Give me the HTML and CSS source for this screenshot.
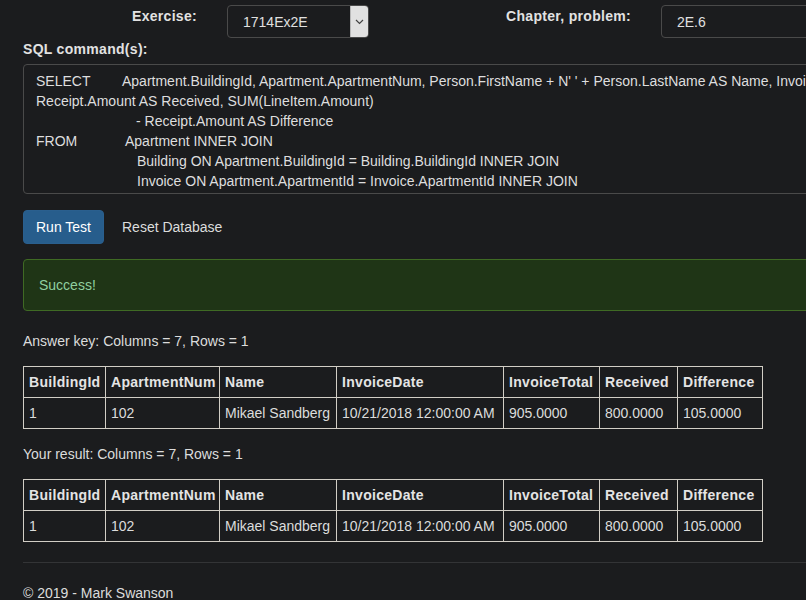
FILE: index.html
```html
<!DOCTYPE html>
<html>
<head>
<meta charset="utf-8">
<link rel="stylesheet" href="styles.css">
</head>
<body>
<div class="page">
  <div class="top-row">
    <label class="lbl lbl-ex">Exercise:</label>
    <div class="field-ex">
      <div class="select">
        <span class="select-val">1714Ex2E</span>
        <span class="select-btn"><svg width="9" height="6" viewBox="0 0 9 6"><path d="M1 1 L4.5 4.5 L8 1" fill="none" stroke="#444" stroke-width="1.2"/></svg></span>
      </div>
    </div>
    <label class="lbl lbl-ch">Chapter, problem:</label>
    <div class="input">2E.6</div>
  </div>

  <div class="lbl sql-lbl">SQL command(s):</div>
  <div class="sql">
    <div class="ln"><span class="kw">SELECT</span>Apartment.BuildingId, Apartment.ApartmentNum, Person.FirstName + N' ' + Person.LastName AS Name, Invoice.InvoiceDate, SUM(LineItem.Amount) AS InvoiceTotal,</div>
    <div class="ln">Receipt.Amount AS Received, SUM(LineItem.Amount)</div>
    <div class="ln ind1">- Receipt.Amount AS Difference</div>
    <div class="ln"><span class="kw kw2">FROM</span>Apartment INNER JOIN</div>
    <div class="ln ind2">Building ON Apartment.BuildingId = Building.BuildingId INNER JOIN</div>
    <div class="ln ind2">Invoice ON Apartment.ApartmentId = Invoice.ApartmentId INNER JOIN</div>
  </div>

  <div class="actions">
    <button class="btn btn-primary">Run Test</button>
    <button class="btn btn-link">Reset Database</button>
  </div>

  <div class="alert">Success!</div>

  <p class="caption cap1">Answer key: Columns = 7, Rows = 1</p>
  <table class="grid">
    <colgroup><col class="w1"><col class="w2"><col class="w3"><col class="w4"><col class="w5"><col class="w6"><col class="w7"></colgroup>
    <tr><th>BuildingId</th><th>ApartmentNum</th><th>Name</th><th>InvoiceDate</th><th>InvoiceTotal</th><th>Received</th><th>Difference</th></tr>
    <tr><td>1</td><td>102</td><td>Mikael Sandberg</td><td>10/21/2018 12:00:00 AM</td><td>905.0000</td><td>800.0000</td><td>105.0000</td></tr>
  </table>

  <p class="caption cap2">Your result: Columns = 7, Rows = 1</p>
  <table class="grid">
    <colgroup><col class="w1"><col class="w2"><col class="w3"><col class="w4"><col class="w5"><col class="w6"><col class="w7"></colgroup>
    <tr><th>BuildingId</th><th>ApartmentNum</th><th>Name</th><th>InvoiceDate</th><th>InvoiceTotal</th><th>Received</th><th>Difference</th></tr>
    <tr><td>1</td><td>102</td><td>Mikael Sandberg</td><td>10/21/2018 12:00:00 AM</td><td>905.0000</td><td>800.0000</td><td>105.0000</td></tr>
  </table>

  <hr class="rule">
  <footer class="foot">© 2019 - Mark Swanson</footer>
</div>
</body>
</html>
```

FILE: styles.css
```css
html, body {
  margin: 0;
  padding: 0;
  overflow: hidden;
  background: #1b1c1e;
}
body {
  font-family: "Liberation Sans", Arial, sans-serif;
  font-size: 14px;
  line-height: 20px;
  color: #dcdcdc;
}
.page {
  width: 1100px;
  padding: 5px 0 0 23px;
}
.top-row {
  display: flex;
  align-items: flex-start;
  height: 33px;
}
.lbl {
  font-weight: bold;
  color: #e2e2e2;
  letter-spacing: 0.3px;
}
.lbl-ex {
  width: 174px;
  padding: 1px 15px 0 0;
  text-align: right;
}
.field-ex {
  width: 157px;
  padding-left: 15px;
}
.select {
  width: 142px;
  height: 33px;
  box-sizing: border-box;
  display: flex;
  border: 1px solid #4a4a4a;
  border-radius: 4px;
  overflow: hidden;
}
.select-val {
  flex: 1;
  padding: 6px 0 0 15px;
  color: #e0e0e0;
}
.select-btn {
  width: 17px;
  background: #e1e1e1;
  border: 1px solid #b8b8b8;
  margin: -1px -1px -1px 0;
  display: flex;
  align-items: center;
  justify-content: center;
}
.lbl-ch {
  width: 247px;
  padding: 1px 30px 0 0;
  text-align: right;
}
.input {
  width: 300px;
  height: 33px;
  box-sizing: border-box;
  border: 1px solid #4a4a4a;
  border-radius: 4px;
  padding: 6px 15px;
  color: #e0e0e0;
}
.sql-lbl {
  margin-top: 1px;
}
.sql {
  margin-top: 5px;
  height: 130px;
  box-sizing: border-box;
  border: 1px solid #4a4a4a;
  border-radius: 4px;
  padding: 6px 12px;
  color: #dedede;
  overflow: hidden;
}
.ln {
  white-space: pre;
}
.kw {
  display: inline-block;
  width: 86px;
}
.kw2 {
  width: 89px;
}
.ind1 {
  padding-left: 100px;
}
.ind2 {
  padding-left: 101px;
}
.actions {
  display: flex;
  gap: 5px;
  margin-top: 16px;
}
.btn {
  font: inherit;
  height: 34px;
  padding: 6px 12px;
  border-radius: 4px;
  border: 1px solid transparent;
  cursor: pointer;
}
.btn-primary {
  background: #275d8c;
  border-color: #2a5f8e;
  color: #ffffff;
}
.btn-link {
  background: transparent;
  color: #dcdcdc;
}
.alert {
  margin-top: 15px;
  width: 900px;
  box-sizing: border-box;
  padding: 15px;
  background: #1f3516;
  border: 1px solid #3f6a24;
  border-radius: 4px;
  color: #8fd0a0;
}
.caption {
  margin: 0;
}
.cap1 {
  margin-top: 20px;
  margin-bottom: 15px;
}
.cap2 {
  margin-top: 15px;
  margin-bottom: 15px;
}
.grid {
  border-collapse: collapse;
  border: 1px solid #d2cec6;
  table-layout: fixed;
  width: 739px;
}
.grid th, .grid td {
  border: 1px solid #d2cec6;
  padding: 5px 5px;
  text-align: left;
  white-space: nowrap;
  overflow: hidden;
}
.grid th {
  font-weight: bold;
  color: #e4e4e4;
  letter-spacing: 0.3px;
}
.w1 { width: 82px; }
.w2 { width: 114px; }
.w3 { width: 117px; }
.w4 { width: 167px; }
.w5 { width: 96px; }
.w6 { width: 78px; }
.w7 { width: 85px; }
.rule {
  margin: 20px 0 0 0;
  border: 0;
  border-top: 1px solid #333436;
  height: 0;
}
.foot {
  margin-top: 20px;
}
```
